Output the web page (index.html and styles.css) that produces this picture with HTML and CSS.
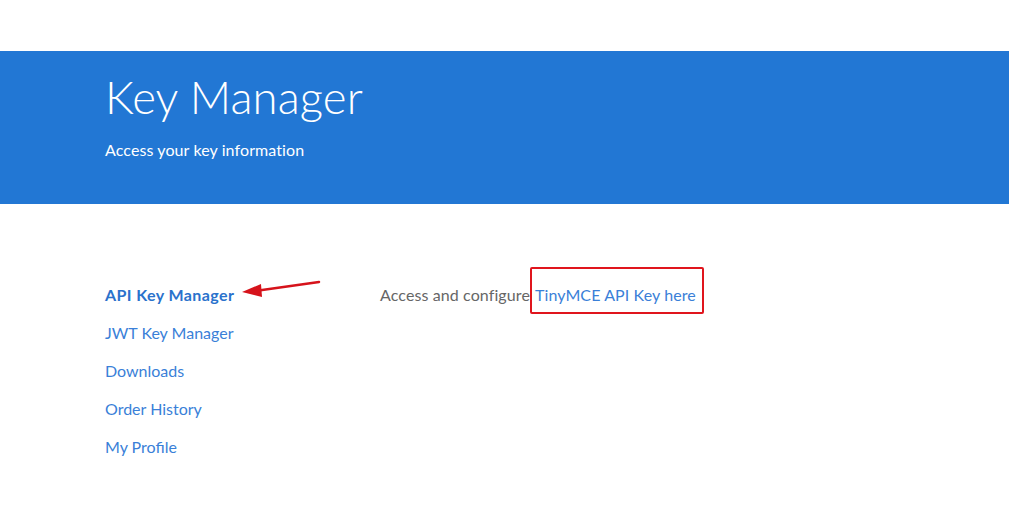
FILE: index.html
```html
<!DOCTYPE html>
<html lang="en">
<head>
    <meta charset="UTF-8">
    <title>Key Manager</title>
    <link rel="stylesheet" href="styles.css">
</head>
<body>
    <div class="topbar"></div>
    <header class="hero">
        <div class="container">
            <h1>Key Manager</h1>
            <p>Access your key information</p>
        </div>
    </header>
    <main class="container account">
        <nav class="sidebar">
            <a class="active" href="#">API Key Manager
                <svg class="arrow" width="80" height="20" viewBox="0 0 80 20">
                    <line x1="14" y1="12" x2="78" y2="3" stroke="#d6131b" stroke-width="2.5" stroke-linecap="round"/>
                    <polygon points="1,13 20,5 21,18" fill="#d6131b"/>
                </svg>
            </a>
            <a href="#">JWT Key Manager</a>
            <a href="#">Downloads</a>
            <a href="#">Order History</a>
            <a href="#">My Profile</a>
        </nav>
        <section class="content">
            <p>Access and configure<span class="highlight"><a href="#">TinyMCE API Key here</a></span></p>
        </section>
    </main>
</body>
</html>
```

FILE: styles.css
```css
* {
    margin: 0;
    padding: 0;
    box-sizing: border-box;
}
body {
    font-family: Lato, "Open Sans", sans-serif;
    background: #fff;
    color: #666;
}
.topbar {
    height: 51px;
}
.container {
    padding-left: 105px;
}
.hero {
    background: #2277d4;
    color: #fff;
    height: 153px;
    padding-top: 19px;
}
.hero h1 {
    font-weight: 300;
    font-size: 45.5px;
    line-height: 54px;
    letter-spacing: 0.1px;
}
.hero p {
    font-size: 16px;
    margin-top: 16px;
    letter-spacing: 0.1px;
}
.account {
    display: flex;
    padding-top: 81px;
}
.sidebar {
    width: 275px;
    display: flex;
    flex-direction: column;
    gap: 18px;
}
.sidebar a {
    color: #3a7fd8;
    text-decoration: none;
    font-size: 16px;
    line-height: 20px;
    position: relative;
}
.sidebar a.active {
    font-weight: 700;
    color: #2a72cc;
    letter-spacing: 0.4px;
}
.arrow {
    position: absolute;
    left: 136px;
    top: -6px;
}
.content p {
    font-size: 16px;
    line-height: 20px;
    letter-spacing: 0.1px;
}
.highlight {
    position: relative;
    padding: 0 7px 0 5px;
}
.highlight::after {
    content: "";
    position: absolute;
    left: 0;
    right: -1px;
    top: -18px;
    bottom: -10px;
    border: 2.5px solid #e0151d;
    border-radius: 2px;
}
.content a {
    color: #3a7fd8;
    text-decoration: none;
    letter-spacing: 0.1px;
}
```
